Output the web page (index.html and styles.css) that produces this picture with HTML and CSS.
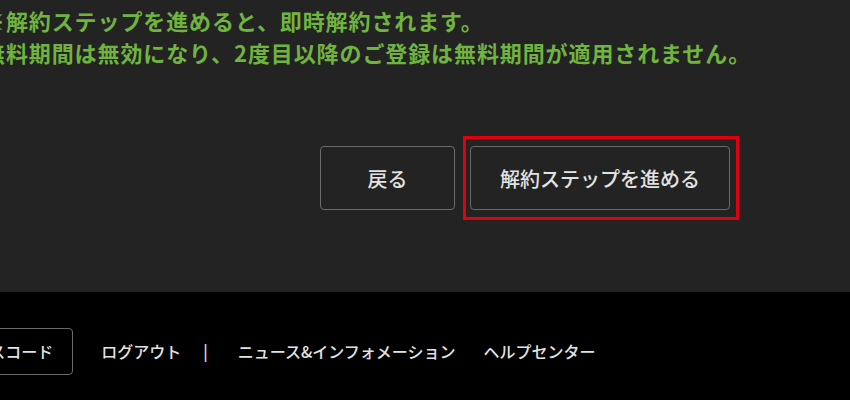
FILE: index.html
```html
<!DOCTYPE html>
<html lang="ja">
<head>
    <meta charset="UTF-8">
    <meta name="viewport" content="width=device-width, initial-scale=1.0">
    <title>解約手続き</title>
    <link rel="stylesheet" href="styles.css">
</head>
<body>

<!-- 解約確認パネル -->
<div class="cancel-panel">
    <div class="notice">
        <p>※解約ステップを進めると、即時解約されます。</p>
        <p>無料期間は無効になり、2度目以降のご登録は無料期間が適用されません。</p>
    </div>

    <div class="actions">
        <button class="btn">戻る</button>
        <span class="highlight">
            <button class="btn btn-next">解約ステップを進める</button>
        </span>
    </div>
</div>

<!-- フッター -->
<div class="site-footer">
    <nav class="footer-nav">
        <a class="code-btn" href="#">アクセスコード</a>
        <a href="#">ログアウト</a>
        <span class="sep">|</span>
        <a href="#">ニュース&amp;インフォメーション</a>
        <a href="#">ヘルプセンター</a>
    </nav>
</div>

</body>
</html>
```

FILE: styles.css
```css
/* styles.css */
html, body {
    margin: 0;
    padding: 0;
    background-color: #000;
    overflow: hidden;
}

body {
    font-family: "Noto Sans CJK JP", "Noto Sans", sans-serif;
    width: 850px;
    height: 400px;
}

.cancel-panel {
    background-color: #232323;
    height: 292px;
    padding-top: 4px;
    box-sizing: border-box;
}

.notice {
    margin-left: -17px;
    color: #6fb43f;
    font-size: 22px;
    font-weight: bold;
    line-height: 32px;
    letter-spacing: 0.9px;
    white-space: nowrap;
}

.notice p {
    margin: 0;
}

.actions {
    display: flex;
    justify-content: flex-end;
    gap: 15px;
    margin-top: 78px;
    padding-right: 120px;
}

.btn {
    height: 64px;
    width: 135px;
    background-color: #232323;
    color: #e2e2e2;
    border: 1px solid #6b6b6b;
    border-radius: 4px;
    font-family: inherit;
    font-size: 20px;
    font-weight: 500;
    cursor: pointer;
}

.btn-next {
    width: 260px;
}

/* red annotation box over the next button */
.highlight {
    position: relative;
    display: flex;
}

.highlight::after {
    content: "";
    position: absolute;
    left: -7px;
    right: -9px;
    top: -10px;
    bottom: -10px;
    border: 3px solid #e0000f;
    pointer-events: none;
}

.site-footer {
    height: 108px;
    display: flex;
    align-items: center;
}

.footer-nav {
    display: flex;
    align-items: center;
    gap: 28px;
    margin-left: -78px;
    margin-top: 10px;
}

.footer-nav a,
.footer-nav .sep {
    color: #e2e2e2;
    font-size: 16px;
    font-weight: 500;
    text-decoration: none;
    white-space: nowrap;
}

.footer-nav .sep {
    margin-left: -6px;
    margin-right: 2px;
}

.code-btn {
    border: 1px solid #6b6b6b;
    border-radius: 4px;
    padding: 0 19px;
    height: 45px;
    display: flex;
    align-items: center;
}
```
